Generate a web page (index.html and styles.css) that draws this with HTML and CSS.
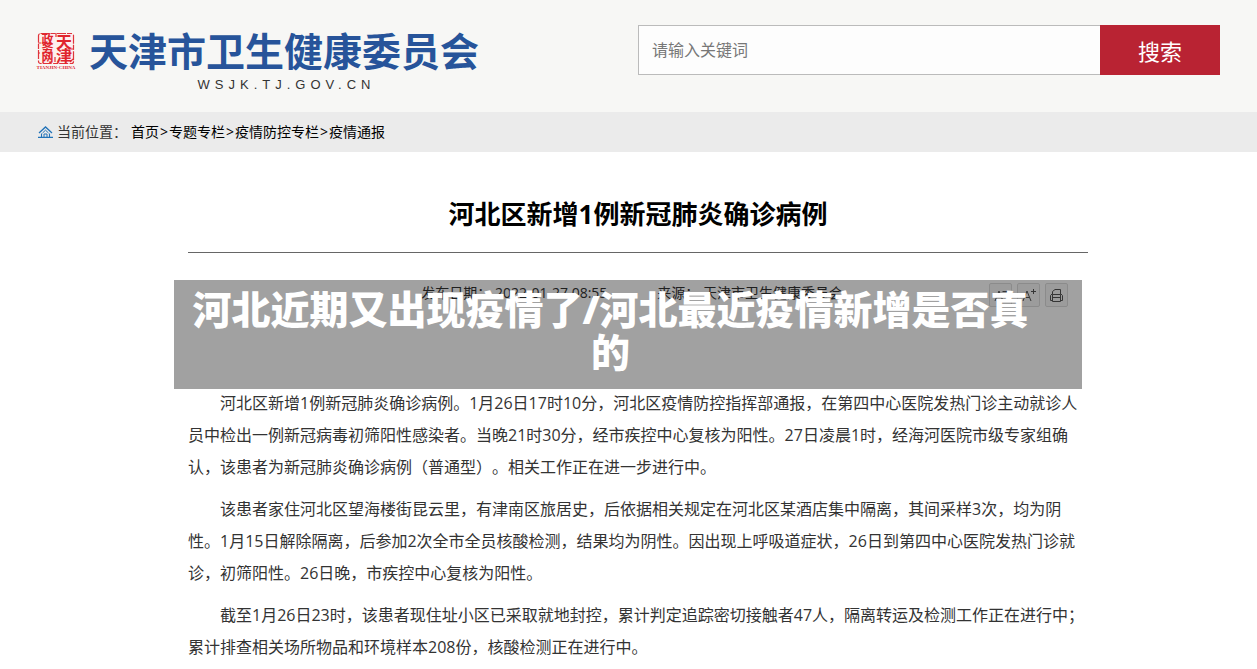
FILE: index.html
```html
<!DOCTYPE html>
<html lang="zh-CN">
<head>
  <meta charset="UTF-8" />
  <meta name="viewport" content="width=device-width, initial-scale=1.0" />
  <title>河北区新增1例新冠肺炎确诊病例</title>
  <link rel="stylesheet" href="styles.css">
</head>
<body>
  <header class="header">
    <a class="logo" href="#">
      <svg class="seal" viewBox="0 0 38 38" aria-hidden="true">
        <rect x="1.5" y="1.5" width="35" height="30" rx="2" fill="#fdf0ee" stroke="#e0343a" stroke-width="1.2" stroke-dasharray="9 1 5 1.5" />
        <path d="M19 1 V5 M18 30 V25 M1 11 H4 M1 21 H3 M34 17 H37 M33 30 L36 27" stroke="#e0343a" stroke-width="1.2" />
        <g fill="#e0252d" font-weight="bold" text-anchor="middle">
          <text x="10.5" y="11.5" font-size="12">政</text>
          <text x="10.5" y="20.5" font-size="12">务</text>
          <text x="10.5" y="29.5" font-size="12">网</text>
          <text x="27" y="15.5" font-size="16">天</text>
          <text x="27" y="29.5" font-size="16">津</text>
          <text class="seal-en" x="19" y="37" font-size="5">TIANJIN·CHINA</text>
        </g>
      </svg>
      <span class="logo-text">
        <span class="logo-name">天津市卫生健康委员会</span>
        <span class="logo-url">WSJK.TJ.GOV.CN</span>
      </span>
    </a>
    <form class="search">
      <input class="search-input" type="text" placeholder="请输入关键词" aria-label="请输入关键词" />
      <button class="search-btn" type="button">搜索</button>
    </form>
  </header>

  <nav class="position">
    <svg class="home" viewBox="0 0 15 12" fill="none" stroke="#2273b8" aria-hidden="true">
      <path d="M1 7 L7.5 1 L14 7" stroke-width="1.3" />
      <path d="M3.5 7.5 V11 M11.5 7.5 V11 M0 11.4 H15" stroke-width="1.1" />
      <path d="M4.5 7 L7.5 4.2 L10.5 7 M6 11 V8 H9 V11" />
    </svg>
    <span class="position-label">当前位置：</span>
    <a href="#">首页</a><span class="sep">&gt;</span>
    <a href="#">专题专栏</a><span class="sep">&gt;</span>
    <a href="#">疫情防控专栏</a><span class="sep">&gt;</span>
    <a href="#">疫情通报</a>
  </nav>

  <main class="article">
    <h1 class="title">河北区新增1例新冠肺炎确诊病例</h1>
    <div class="meta">
      <span class="date">发布日期： 2022-01-27 08:55</span>
      <span class="source">来源： 天津市卫生健康委员会</span>
      <div class="tools">
        <button class="tool" type="button" aria-label="缩小字体">
          <svg viewBox="0 0 21 21"><path d="M5 16 L9 6 L13 16 M6.5 12.5 H11.5 M12.5 6.5 H17.5" /></svg>
        </button>
        <button class="tool" type="button" aria-label="放大字体">
          <svg viewBox="0 0 21 21"><path d="M5 16 L9 6 L13 16 M6.5 12.5 H11.5 M13 6.5 H18 M15.5 4 V9" /></svg>
        </button>
        <button class="tool" type="button" aria-label="打印">
          <svg viewBox="0 0 21 21"><path d="M6.5 9.5 V6.5 L9 4.5 H14.5 V9.5 M6.5 9.5 H14.5 M6.5 12.5 H14.5 M6.5 9.5 V16.5 H14.5 V9.5 M6.5 15.5 H4.5 V10.5 L6.5 8.5 M14.5 15.5 H16.5 V10.5 L14.5 8.5" /></svg>
        </button>
      </div>
    </div>
    <div class="content">
      <p>河北区新增1例新冠肺炎确诊病例。1月26日17时10分，河北区疫情防控指挥部通报，在第四中心医院发热门诊主动就诊人员中检出一例新冠病毒初筛阳性感染者。当晚21时30分，经市疾控中心复核为阳性。27日凌晨1时，经海河医院市级专家组确认，该患者为新冠肺炎确诊病例（普通型）。相关工作正在进一步进行中。</p>
      <p>该患者家住河北区望海楼街昆云里，有津南区旅居史，后依据相关规定在河北区某酒店集中隔离，其间采样3次，均为阴性。1月15日解除隔离，后参加2次全市全员核酸检测，结果均为阴性。因出现上呼吸道症状，26日到第四中心医院发热门诊就诊，初筛阳性。26日晚，市疾控中心复核为阳性。</p>
      <p>截至1月26日23时，该患者现住址小区已采取就地封控，累计判定追踪密切接触者47人，隔离转运及检测工作正在进行中；累计排查相关场所物品和环境样本208份，核酸检测正在进行中。</p>
    </div>
    <div class="banner">河北近期又出现疫情了/河北最近疫情新增是否真的</div>
  </main>
</body>
</html>
```
FILE: styles.css
```css
body {
  margin: 0;
  background: #fff;
  color: #333;
  font-family: "Open Sans", "Noto Sans CJK SC", sans-serif;
  font-size: 14px;
  text-spacing-trim: space-all;
}
a {
  color: #000;
  text-decoration: none;
}

.header {
  display: flex;
  justify-content: space-between;
  align-items: flex-start;
  gap: 24px;
  padding: 25px 37px 0;
  min-height: 87px;
  background: #f7f7f5;
}
.logo {
  display: flex;
  gap: 14px;
}
.seal {
  width: 38px;
  height: 38px;
  margin-top: 7px;
  overflow: visible;
}
.seal-en {
  font-family: "Liberation Serif", serif;
}
.logo-text {
  display: flex;
  flex-direction: column;
  align-items: center;
}
.logo-name {
  font-size: 39px;
  line-height: 52px;
  font-weight: bold;
  color: #27549a;
  white-space: nowrap;
}
.logo-url {
  padding-left: 5px;
  font-family: "Liberation Sans", sans-serif;
  font-size: 13px;
  line-height: 16px;
  letter-spacing: 5px;
  color: #333;
}
.search {
  display: flex;
  flex: 0 1 582px;
  height: 50px;
}
.search-input {
  flex: 1;
  min-width: 0;
  box-sizing: border-box;
  padding: 0 13px;
  border: 1px solid #bbb;
  border-right: none;
  background: #fdfdfd;
  font: 16px "Open Sans", "Noto Sans CJK SC", sans-serif;
}
.search-input::placeholder { color: #777; }
.search-btn {
  width: 120px;
  border: none;
  background: #b92333;
  color: #fff;
  font: 22px "Open Sans", "Noto Sans CJK SC", sans-serif;
  cursor: pointer;
}

.position {
  display: flex;
  align-items: center;
  padding: 0 38px;
  background: #ebebeb;
  line-height: 40px;
}
.home {
  width: 15px;
  height: 12px;
  margin-right: 4px;
}
.position-label { margin-right: 4px; }
.sep {
  margin: 0 1px;
  color: #000;
}

.article {
  position: relative;
  padding: 36px 169px 0 188px;
}
.title {
  margin: 0;
  padding-bottom: 12px;
  border-bottom: 1px solid #666;
  color: #000;
  font-size: 26px;
  line-height: 52px;
  text-align: center;
}
.meta {
  display: flex;
  justify-content: flex-end;
  margin: 30px 20px 0 0;
  line-height: 20px;
}
.date { margin-right: 50px; }
.source { margin-right: 146px; }
.tools {
  display: flex;
  gap: 5px;
}
.tool {
  width: 23px;
  height: 24px;
  padding: 0;
  border: 1px solid #ddd;
  border-radius: 2px;
  background: #f8f8f8;
}
.tool svg {
  display: block;
  fill: none;
  stroke: #555;
}
.content {
  margin-top: 80px;
  font-size: 16px;
  line-height: 32px;
}
.content p {
  margin: 0 0 10px;
  text-indent: 2em;
}

/* Schlagzeile liegt halbtransparent über dem Artikel */
.banner {
  position: absolute;
  top: 128px;
  left: 174px;
  right: 175px;
  padding: 7px 50px 16px 15px;
  background: rgba(0, 0, 0, 0.37);
  color: #fff;
  font-size: 39px;
  line-height: 43px;
  font-weight: 900;
  text-align: center;
}
```
